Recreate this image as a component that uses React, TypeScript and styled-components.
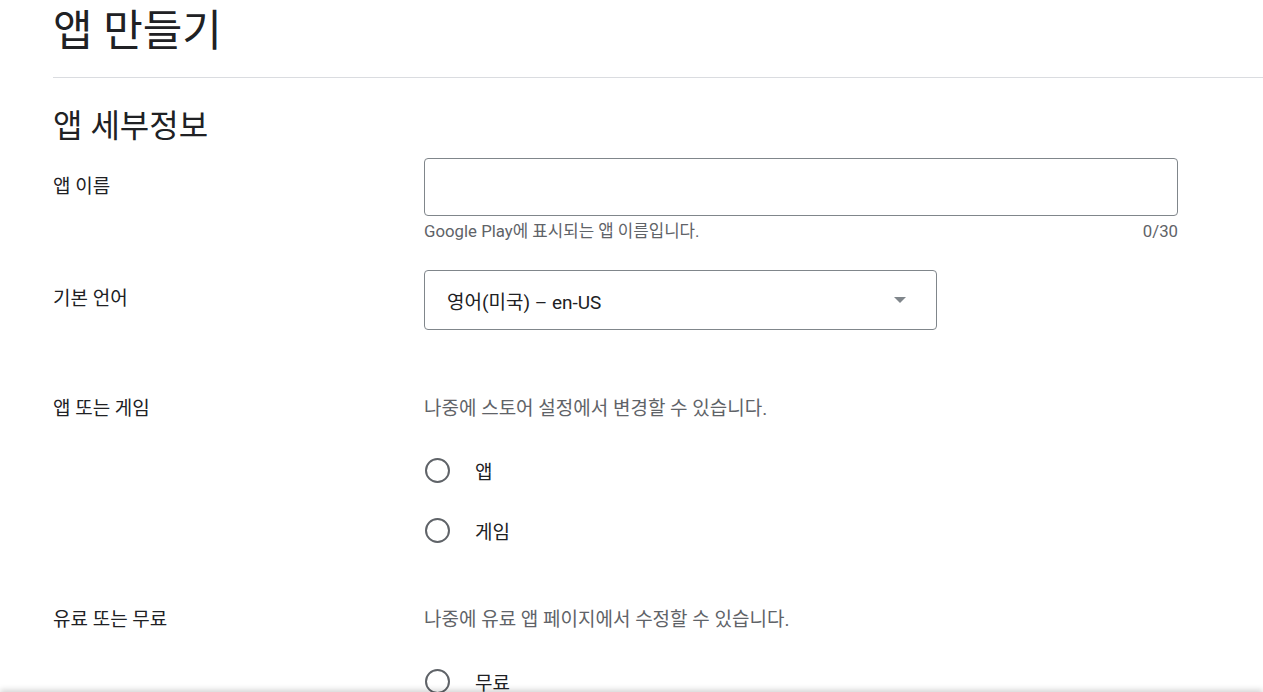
import React, { useState } from 'react';
import styled, { createGlobalStyle } from 'styled-components';

const GlobalStyle = createGlobalStyle`
  body {
    margin: 0;
    background: #ffffff;
    font-family: Roboto, 'Noto Sans CJK KR', sans-serif;
    color: #202124;
    overflow: hidden;
  }
`;

const Page = styled.div`
  padding-left: 53px;
`;

const Header = styled.div`
  height: 77px;
  border-bottom: 1px solid #dadce0;
`;

const PageTitle = styled.h1`
  margin: 0;
  padding-top: 5px;
  font-size: 43px;
  font-weight: 400;
  line-height: 52px;
  color: #202124;
`;

const Section = styled.section`
  padding-top: 28px;
`;

const SectionTitle = styled.h2`
  margin: 0 0 12px;
  font-size: 32px;
  font-weight: 400;
  line-height: 40px;
  color: #202124;
`;

const Row = styled.div<{ gap: number }>`
  display: grid;
  grid-template-columns: 371px 754px;
  margin-bottom: ${(p) => p.gap}px;
`;

const Label = styled.div<{ top: number }>`
  padding-top: ${(p) => p.top}px;
  font-size: 19px;
  line-height: 24px;
  color: #202124;
`;

const Field = styled.div`
  display: flex;
  flex-direction: column;
`;

const TextBox = styled.input`
  box-sizing: border-box;
  width: 754px;
  height: 58px;
  border: 1px solid #80868b;
  border-radius: 4px;
  padding: 0 22px;
  font-family: inherit;
  font-size: 19px;
  outline: none;
`;

const Helper = styled.div`
  display: flex;
  justify-content: space-between;
  padding-top: 3px;
  font-size: 16.8px;
  line-height: 24px;
  color: #5f6368;
`;

const Select = styled.div`
  box-sizing: border-box;
  width: 513px;
  height: 60px;
  border: 1px solid #80868b;
  border-radius: 4px;
  padding: 0 30px 0 22px;
  display: flex;
  align-items: center;
  justify-content: space-between;
  font-size: 19px;
  color: #202124;
  cursor: pointer;
`;

const Arrow = styled.span`
  width: 0;
  height: 0;
  border-left: 6px solid transparent;
  border-right: 6px solid transparent;
  border-top: 6px solid #80868b;
`;

const Note = styled.div`
  padding-top: 1px;
  font-size: 19px;
  line-height: 24px;
  color: #5f6368;
`;

const Options = styled.div`
  display: flex;
  flex-direction: column;
  gap: 35px;
  padding-top: 37px;
`;

const Option = styled.label`
  display: flex;
  align-items: center;
  height: 25px;
  font-size: 19px;
  color: #202124;
  cursor: pointer;
`;

const Circle = styled.span<{ on: boolean }>`
  box-sizing: border-box;
  width: 25px;
  height: 25px;
  margin-left: 1px;
  margin-right: 25px;
  border-radius: 50%;
  border: 2px solid ${(p) => (p.on ? '#01875f' : '#5f6368')};
  display: flex;
  align-items: center;
  justify-content: center;
  &::after {
    content: '';
    width: 11px;
    height: 11px;
    border-radius: 50%;
    background: ${(p) => (p.on ? '#01875f' : 'transparent')};
  }
`;

const Footer = styled.div`
  position: fixed;
  left: 0;
  right: 0;
  bottom: -60px;
  height: 60px;
  background: #ffffff;
  box-shadow: 0 -2px 6px rgba(0, 0, 0, 0.18);
`;

const Radio: React.FC<{ label: string; on: boolean; onPick: () => void }> = (props) => (
  <Option onClick={props.onPick}>
    <Circle on={props.on} />
    {props.label}
  </Option>
);

export default function App() {
  const [name, setName] = useState<string>('');
  const [kind, setKind] = useState<string>('');
  const [price, setPrice] = useState<string>('');

  return (
    <>
      <GlobalStyle />
      <Page>
        <Header>
          <PageTitle>앱 만들기</PageTitle>
        </Header>
        <Section>
          <SectionTitle>앱 세부정보</SectionTitle>

          <Row gap={27}>
            <Label top={17}>앱 이름</Label>
            <Field>
              <TextBox value={name} maxLength={30} onChange={(e) => setName(e.target.value)} />
              <Helper>
                <span>Google Play에 표시되는 앱 이름입니다.</span>
                <span>{name.length}/30</span>
              </Helper>
            </Field>
          </Row>

          <Row gap={66}>
            <Label top={17}>기본 언어</Label>
            <Field>
              <Select>
                <span>영어(미국) – en-US</span>
                <Arrow />
              </Select>
            </Field>
          </Row>

          <Row gap={64}>
            <Label top={1}>앱 또는 게임</Label>
            <Field>
              <Note>나중에 스토어 설정에서 변경할 수 있습니다.</Note>
              <Options>
                <Radio label="앱" on={kind === 'app'} onPick={() => setKind('app')} />
                <Radio label="게임" on={kind === 'game'} onPick={() => setKind('game')} />
              </Options>
            </Field>
          </Row>

          <Row gap={40}>
            <Label top={1}>유료 또는 무료</Label>
            <Field>
              <Note>나중에 유료 앱 페이지에서 수정할 수 있습니다.</Note>
              <Options>
                <Radio label="무료" on={price === 'free'} onPick={() => setPrice('free')} />
                <Radio label="유료" on={price === 'paid'} onPick={() => setPrice('paid')} />
              </Options>
            </Field>
          </Row>
        </Section>
      </Page>
      <Footer />
    </>
  );
}
